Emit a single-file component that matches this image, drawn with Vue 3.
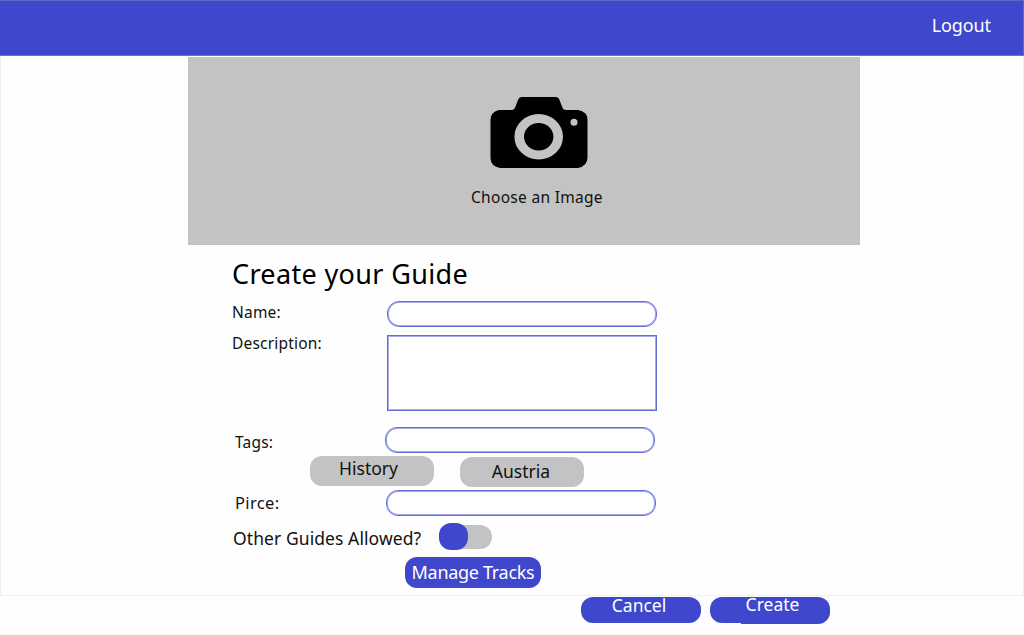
<script setup>
import { ref } from 'vue'

const name = ref('')
const description = ref('')
const tag = ref('')
const price = ref('')
const othersAllowed = ref(false)
const tags = ['History', 'Austria']
</script>

<template>
  <div class="page">
    <div class="frame">
      <header class="topbar"><a class="logout">Logout</a></header>
      <section class="hero">
        <svg class="camera" width="98" height="73" viewBox="0 -0.5 98 73">
          <path d="M9 13.500H21.500Q24.500 13.500 25.500 10L28 3.500Q29 .5 32 .5H65.500Q68.500 .5 69.500 3.500L72 10Q73 13.500 76 13.500H88Q97.500 15 97.500 23V61Q97.500 69.500 88 71.500H10Q1 70 .5 62V23Q1 15 9 13.500Z" fill="#000" />
          <ellipse cx="48.700" cy="40.200" rx="24.300" ry="22.700" fill="#c3c3c3" />
          <ellipse cx="48.700" cy="40.200" rx="14.700" ry="13.700" fill="#000" />
          <circle cx="84" cy="25.700" r="3.500" fill="#c3c3c3" />
        </svg>
        <span class="choose">Choose an Image</span>
      </section>
      <form class="form" @submit.prevent>
        <h1 class="title">Create your Guide</h1>
        <div class="row name-row">
          <label class="lab name-label">Name:</label>
          <input v-model="name" class="field" />
        </div>
        <div class="row desc-row">
          <label class="lab desc-label">Description:</label>
          <textarea v-model="description" class="area"></textarea>
        </div>
        <div class="row tags-row">
          <label class="lab tags-label">Tags:</label>
          <input v-model="tag" class="field" />
        </div>
        <div class="chips">
          <span v-for="t in tags" :key="t" class="chip" :class="t.toLowerCase()">{{ t }}</span>
        </div>
        <div class="row price-row">
          <label class="lab price-label">Pirce:</label>
          <input v-model="price" class="field" />
        </div>
        <div class="row allow-row">
          <label class="allow-label">Other Guides Allowed?</label>
          <button type="button" class="toggle" @click="othersAllowed = !othersAllowed">
            <span class="knob" :class="{ on: othersAllowed }"></span>
            <span class="track"></span>
          </button>
        </div>
        <button type="button" class="manage">Manage Tracks</button>
      </form>
    </div>
    <footer class="actions">
      <button class="action cancel">Cancel</button>
      <button class="action create">Create</button>
    </footer>
  </div>
</template>

<style>
body {
  margin: 0;
  background: #fefefe;
  overflow: hidden;
}
</style>

<style scoped>
.page {
  width: 1024px;
  height: 635px;
  overflow: hidden;
  font-family: "Noto Sans", "Open Sans", sans-serif;
  color: #111;
  white-space: nowrap;
}
.page * { box-sizing: border-box; }
button, input, textarea {
  font-family: inherit;
  margin: 0;
  padding: 0;
  border: 0;
  outline: 0;
}
.frame {
  height: 596px;
  border: 1px solid #f0f0f0;
  border-top: 0;
}
.topbar {
  height: 56px;
  margin: 0 -1px;
  padding-right: 32px;
  display: flex;
  justify-content: flex-end;
  background: #3f48cc;
  border: 1px solid #6167c4;
  border-width: 1px 1px 1px 0;
  border-bottom-color: #6970d7;
}
.logout {
  font-size: 18px;
  letter-spacing: -.1px;
  line-height: 48px;
  color: #fff;
}
.hero {
  width: 672px;
  height: 188px;
  margin: 1px 0 0 187px;
  background: #c3c3c3;
  display: flex;
  flex-direction: column;
}
.camera { flex: none; margin: 39px 0 0 302px; }
.choose {
  margin: 18px 0 0 283px;
  font-size: 15.500px;
  letter-spacing: .3px;
  line-height: 21px;
}
.form { padding-left: 231px; }
.title {
  margin: 0;
  height: 56px;
  font-size: 27px;
  font-weight: 400;
  letter-spacing: .35px;
  line-height: 58px;
  color: #000;
}
.row { display: flex; }
.lab {
  flex: none;
  width: 155px;
  font-size: 15.500px;
  letter-spacing: .2px;
  line-height: 22px;
}
.field {
  width: 270px;
  height: 26px;
  padding: 0 10px;
  background: #fff;
  border: 1px solid #646bdb;
  box-shadow: inset 0 0 0 1px #a5aaea;
  border-radius: 12px;
}
.area {
  width: 270px;
  height: 76px;
  padding: 4px 8px;
  background: #fff;
  border: 1px solid #646bdb;
  box-shadow: inset 0 0 0 1px #a5aaea;
  resize: none;
}
.name-row { height: 34px; }
.desc-row { height: 92px; }
.desc-label { line-height: 16px; }
.tags-row { height: 29px; }
.tags-label { width: 150px; margin-left: 3px; line-height: 31px; }
.chips {
  height: 34px;
  display: flex;
  gap: 26px;
  padding-left: 78px;
}
.chip {
  width: 124px;
  height: 30px;
  border-radius: 12px;
  background: #c3c3c3;
  text-align: center;
  font-size: 17.500px;
  line-height: 25px;
}
.history { padding-right: 7px; }
.austria { margin-top: 1px; padding-right: 2px; line-height: 29px; }
.price-row { height: 33px; }
.price-label { width: 151px; margin-left: 3px; font-size: 16.500px; letter-spacing: .35px; line-height: 26px; }
.allow-row { height: 34px; }
.allow-label { width: 206px; margin-left: 1px; font-size: 17.500px; letter-spacing: .08px; line-height: 31px; }
.toggle {
  width: 53px;
  height: 27px;
  display: flex;
  align-items: center;
  background: none;
}
.track {
  width: 34px;
  height: 24px;
  margin-left: -10px;
  border-radius: 0 12px 12px 0;
  background: #c3c3c3;
}
.knob {
  position: relative;
  z-index: 1;
  width: 29px;
  height: 27px;
  border-radius: 12px;
  background: #3f48cc;
}
.knob.on { left: 24px; }
.manage {
  display: block;
  width: 136px;
  height: 31px;
  margin-left: 173px;
  border-radius: 12px;
  background: #3f48cc;
  color: #fff;
  font-size: 18px;
  letter-spacing: -.3px;
  line-height: 31px;
}
.actions {
  display: flex;
  gap: 9px;
  padding: 1px 0 0 581px;
}
.action {
  width: 120px;
  height: 26px;
  border-radius: 12px;
  background: #3f48cc;
  color: #fff;
  font-size: 17.500px;
  line-height: 17px;
  display: flex;
  justify-content: center;
}
.cancel { padding-right: 4px; }
.create {
  position: relative;
  padding-left: 5px;
  line-height: 15px;
}
.create::after {
  content: "";
  position: absolute;
  left: 31px;
  right: 0;
  bottom: -1px;
  height: 14px;
  z-index: -1;
  border-radius: 0 0 12px 0;
  background: #3f48cc;
}
</style>
